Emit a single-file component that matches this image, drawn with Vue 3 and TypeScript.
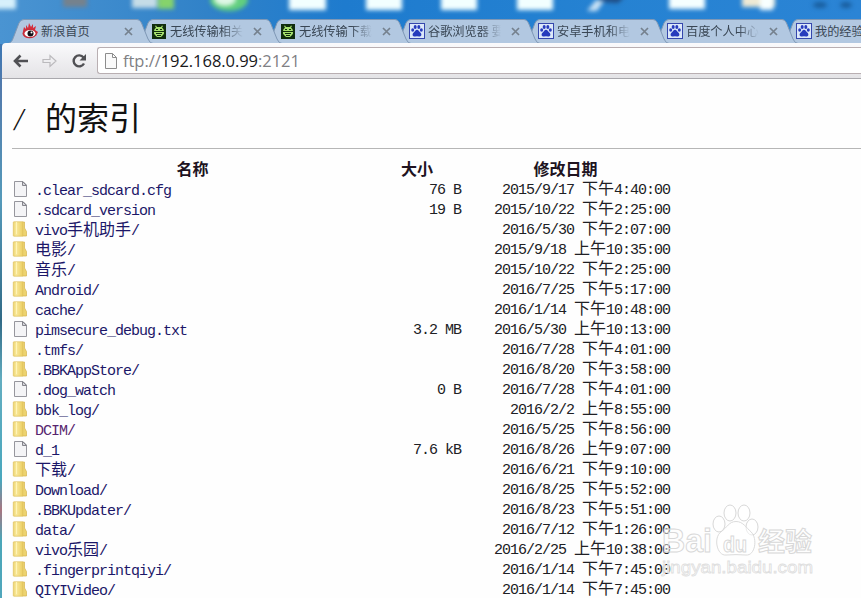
<script setup lang="ts">
interface Tab { title: string; icon: 'sina' | 'android' | 'paw' }
interface Entry { name: string; size: string; date: string; file?: boolean; visited?: boolean }
interface Run { text: string; wide: boolean }

const tabs: Tab[] = [
  { title: '新浪首页', icon: 'sina' },
  { title: '无线传输相关', icon: 'android' },
  { title: '无线传输下载', icon: 'android' },
  { title: '谷歌浏览器 要', icon: 'paw' },
  { title: '安卓手机和电脑', icon: 'paw' },
  { title: '百度个人中心', icon: 'paw' },
  { title: '我的经验', icon: 'paw' },
]

const entries: Entry[] = [
  { name: '.clear_sdcard.cfg', size: '76 B', date: '2015/9/17 下午4:40:00', file: true },
  { name: '.sdcard_version', size: '19 B', date: '2015/10/22 下午2:25:00', file: true },
  { name: 'vivo手机助手/', size: '', date: '2016/5/30 下午2:07:00' },
  { name: '电影/', size: '', date: '2015/9/18 上午10:35:00' },
  { name: '音乐/', size: '', date: '2015/10/22 下午2:25:00' },
  { name: 'Android/', size: '', date: '2016/7/25 下午5:17:00' },
  { name: 'cache/', size: '', date: '2016/1/14 下午10:48:00' },
  { name: 'pimsecure_debug.txt', size: '3.2 MB', date: '2016/5/30 上午10:13:00', file: true },
  { name: '.tmfs/', size: '', date: '2016/7/28 下午4:01:00' },
  { name: '.BBKAppStore/', size: '', date: '2016/8/20 下午3:58:00' },
  { name: '.dog_watch', size: '0 B', date: '2016/7/28 下午4:01:00', file: true },
  { name: 'bbk_log/', size: '', date: '2016/2/2 上午8:55:00' },
  { name: 'DCIM/', size: '', date: '2016/5/25 下午8:56:00', visited: true },
  { name: 'd_1', size: '7.6 kB', date: '2016/8/26 上午9:07:00', file: true },
  { name: '下载/', size: '', date: '2016/6/21 下午9:10:00' },
  { name: 'Download/', size: '', date: '2016/8/25 下午5:52:00' },
  { name: '.BBKUpdater/', size: '', date: '2016/8/23 下午5:51:00' },
  { name: 'data/', size: '', date: '2016/7/12 下午1:26:00' },
  { name: 'vivo乐园/', size: '', date: '2016/2/25 上午10:38:00' },
  { name: '.fingerprintqiyi/', size: '', date: '2016/1/14 下午7:45:00' },
  { name: 'QIYIVideo/', size: '', date: '2016/1/14 下午7:45:00' },
]

// Latin runs are half the width of the CJK ones
function runs(s: string): Run[] {
  return (s.match(/[\u4e00-\u9fff]+|[^\u4e00-\u9fff]+/g) ?? []).map(text => ({
    text,
    wide: /[\u4e00-\u9fff]/.test(text),
  }))
}
</script>

<template>
  <div class="window">
    <svg class="desktop" width="861" height="44" viewBox="0 0 861 44">
      <g class="blurred">
        <rect x="-8" y="-4" width="24" height="13" fill="#d7f0fb" />
        <rect x="63" y="-6" width="24" height="13" fill="#75828d" />
        <rect x="132" y="-6" width="25" height="14" fill="#c5dce7" />
        <rect x="158" y="-6" width="16" height="15" fill="#86d36b" />
        <ellipse cx="229" cy="0" rx="19" ry="11" fill="#62cf7e" />
        <ellipse cx="225" cy="-1" rx="11" ry="7" fill="#dff7e6" />
        <rect x="289" y="-6" width="37" height="16" fill="#f2ffff" />
        <rect x="366" y="-6" width="36" height="16" fill="#f2ffff" />
        <rect x="441" y="-6" width="36" height="16" fill="#f2ffff" />
        <rect x="517" y="-6" width="36" height="16" fill="#f2ffff" />
        <path d="M588 9L603-4H625L618 3L603 2L596 11Z" fill="#204c83" />
        <path d="M587 11L596 0L604 1L597 11Z" fill="#c9e2f5" />
        <rect x="669" y="-6" width="36" height="15" fill="#f5ffff" />
        <rect x="742" y="-6" width="33" height="13" fill="#eee9d4" />
        <rect x="760" y="-6" width="13" height="16" fill="#f8ffff" />
        <ellipse cx="820" cy="5" rx="7" ry="3" fill="#195d9d" />
        <ellipse cx="846" cy="5" rx="6" ry="3" fill="#195d9d" />
      </g>
    </svg>
    <header class="tabs">
      <div v-for="(tab, i) in tabs" :key="i" class="tab" :style="{ zIndex: 10 - i }">
        <svg class="shape" width="146" height="25" viewBox="0 0 146 25">
          <path d="M0 24.5C4 23 4 22 6 17L11 4Q12.500 .5 16 .5H129Q132 .5 133.500 4L140 20Q142 24.500 145 24.500" />
        </svg>
        <svg v-if="tab.icon === 'sina'" class="fav" viewBox="0 0 16 16">
          <path d="M1 8L2 4L4 6L4 2L6 5L7 0L9 4L11 1L11 5L14 3L13 7L16 9L14 13H2Z" fill="#d52f3d" />
          <ellipse cx="7.500" cy="10.500" rx="7" ry="4.800" fill="#c62e3c" />
          <ellipse cx="8" cy="10.500" rx="5.500" ry="3.500" fill="#fff" />
          <circle cx="8.500" cy="10.500" r="3" fill="#151018" />
          <circle cx="9.500" cy="9.500" r="1" fill="#fff" />
        </svg>
        <svg v-else-if="tab.icon === 'android'" class="fav" viewBox="0 0 16 16">
          <rect x="1" y="1" width="14" height="15" fill="#102d0e" />
          <path d="M4 3L5 2.500L6 4H10L11 2.500L12 3L11 4.500Q13 6 13 8H3Q3 6 5 4.500ZM3 9H13V10.500L12 12L10 14H6L4 12L3 10.500Z" fill="#a6e16d" />
          <path d="M5 6H7V7H5ZM9 6H11V7H9ZM5 10H11V11H5ZM6 12H10V13H6Z" fill="#102d0e" />
        </svg>
        <svg v-else class="fav" viewBox="0 0 16 16">
          <rect x=".5" y=".5" width="15" height="15" fill="#dce8fa" stroke="#3547ad" />
          <g fill="#263bbd">
            <ellipse cx="3.700" cy="7" rx="1.500" ry="1.800" />
            <ellipse cx="6.200" cy="4" rx="1.500" ry="1.900" />
            <ellipse cx="9.800" cy="4" rx="1.500" ry="1.900" />
            <ellipse cx="12.300" cy="7" rx="1.500" ry="1.800" />
            <path d="M8 6.700C6.500 6.700 6 8.500 4.500 9.800C2.800 11.300 3.700 14 6 13.500Q8 13 10 13.500C12.300 14 13.200 11.300 11.500 9.800C10 8.500 9.500 6.700 8 6.700Z" />
          </g>
        </svg>
        <span class="tab-title" :class="{ faded: tab.title.length > 4 }">{{ tab.title }}</span>
        <svg class="close" viewBox="0 0 9 9"><path d="M1 1L8 8M8 1L1 8" /></svg>
      </div>
    </header>

    <nav class="toolbar">
      <svg class="nav back" viewBox="0 0 16 14"><path d="M15 7H2M7.500 1.500L2 7L7.500 12.500" /></svg>
      <svg class="nav forward" viewBox="0 0 16 14"><path d="M1 5.500H8V1.500L14 7L8 12.500V8.500H1Z" /></svg>
      <svg class="nav reload" viewBox="0 0 16 16"><path d="M12.500 4.500A5.500 5.500 0 1 0 13 10.500" /><path class="tip" d="M15 1V7.500H8.500Z" /></svg>
      <div class="address">
        <svg class="page" viewBox="0 0 12 16"><path d="M.5 .5H7.500L11.500 4.500V15.500H.5ZM7.500 .5V4.500H11.500" /></svg>
        <span class="url">ftp://<b>192.168.0.99</b>:2121</span>
      </div>
    </nav>

    <main class="content">
      <h1><span class="slash">/</span>的索引</h1>
      <div class="row head"><span>名称</span><span>大小</span><span>修改日期</span></div>
      <div v-for="entry in entries" :key="entry.name" class="row">
        <a class="name" :class="{ visited: entry.visited }">
          <svg v-if="entry.file" class="icon" viewBox="0 0 16 16">
            <path d="M2.500 .5H11L14.500 4V15.500H2.500Z" fill="#f4f4f6" stroke="#96969d" />
            <path d="M10.500 .5V4.500H14.500Z" fill="#d5d5da" stroke="#85858c" />
          </svg>
          <svg v-else class="icon" viewBox="0 0 16 16">
            <path d="M10 1H12.500V7L14.500 10.500V15H10Z" fill="#edd36f" stroke="#d6b44f" stroke-width=".7" />
            <rect x="1.300" y=".8" width="9.500" height="14.400" rx=".6" fill="url(#folderFill)" stroke="#dfc25e" stroke-width=".7" />
            <path d="M4.500 1V13" stroke="#fff4b8" />
          </svg>
          <span class="label"><span v-for="(r, k) in runs(entry.name)" :key="k" :class="r.wide ? 'wide' : 'narrow'">{{ r.text }}</span></span>
        </a>
        <span class="value"><span class="narrow">{{ entry.size }}</span></span>
        <span class="value"><span v-for="(r, k) in runs(entry.date)" :key="k" :class="r.wide ? 'wide' : 'narrow'">{{ r.text }}</span></span>
      </div>
    </main>

    <svg class="watermark" width="172" height="80" viewBox="0 0 172 80">
      <defs>
        <linearGradient id="folderFill"><stop offset="0" stop-color="#edd46f" /><stop offset=".3" stop-color="#f9e99d" /><stop offset="1" stop-color="#ebce61" /></linearGradient>
      </defs>
      <g class="outline">
        <text x="2" y="52" font-size="34" textLength="50" lengthAdjust="spacingAndGlyphs">Bai</text>
        <ellipse cx="59" cy="24" rx="6" ry="8" />
        <ellipse cx="70" cy="13" rx="6" ry="8" />
        <ellipse cx="84" cy="13" rx="6" ry="8" />
        <ellipse cx="92" cy="27" rx="6" ry="8" />
        <path d="M76 25C69 25 67 32 61 37C53 44 57 65 66 64Q76 63 86 64C95 65 98 45 91 37C86 32 83 25 76 25Z" />
        <text x="63" y="58" font-size="22" textLength="24" lengthAdjust="spacingAndGlyphs">du</text>
        <text x="98" y="51" font-size="26" textLength="54" lengthAdjust="spacingAndGlyphs">经验</text>
      </g>
      <text class="domain" x="2" y="73" font-size="17" textLength="151" lengthAdjust="spacingAndGlyphs">jingyan.baidu.com</text>
    </svg>
  </div>
</template>

<style>
body { margin: 0; overflow: hidden; }
</style>

<style scoped>
.window { position: relative; width: 861px; height: 598px; overflow: hidden; box-sizing: border-box; padding-left: 2px; background: linear-gradient(#2672b9 0, #537bac 90px, #559aba 200px, #316a86 320px, #63adc0 380px, #49a7bd 480px, #a87580 510px, #4aa6b8 540px, #50a6bb); font-family: "Noto Sans CJK SC", sans-serif; }
.desktop { position: absolute; left: 0; top: 0; background: linear-gradient(90deg, #4a94d2 0, #3182c8 24%, #1e7bce 40%, #2582d2 70%, #2b84d5); }
.blurred { filter: blur(2px); }
.tabs { position: relative; display: flex; height: 43px; box-sizing: border-box; padding: 19px 0 0 6px; }
.tab { position: relative; flex: 0 0 129px; display: flex; align-items: center; height: 24px; box-sizing: border-box; padding-left: 14px; }
.shape { position: absolute; left: 0; top: 0; fill: #b2c8e1; stroke: #7f98b6; stroke-width: 1; }
.fav { position: relative; width: 16px; height: 16px; flex: none; }
.tab-title { position: relative; width: 73px; margin-left: 3px; overflow: hidden; white-space: nowrap; font-size: 12.2px; line-height: 22px; color: #394654; }
.faded { -webkit-mask-image: linear-gradient(90deg, #000 72%, transparent 100%); mask-image: linear-gradient(90deg, #000 72%, transparent 100%); }
.close { position: relative; width: 9px; height: 9px; margin-left: 10px; flex: none; fill: none; stroke: #75818e; stroke-width: 1.7; }
.toolbar { position: relative; z-index: 20; display: flex; align-items: center; height: 36px; box-sizing: border-box; padding-left: 11px; border-bottom: 1px solid #a9a8ad; border-radius: 4px 0 0 0; background: linear-gradient(#fafafc, #e4e3e6); }
.nav { flex: none; width: 16px; height: 14px; fill: none; stroke: #505054; stroke-width: 2.6; }
.forward { margin-left: 13px; stroke: #bbbabd; stroke-width: 1.2; }
.reload { width: 16px; height: 16px; margin-left: 13px; stroke-width: 2.4; }
.tip { fill: #505054; stroke: none; }
.address { display: flex; align-items: center; flex: 1; height: 27px; box-sizing: border-box; margin-left: 10px; padding-left: 7px; border: 1px solid #b9afb2; border-right: 0; border-radius: 3px 0 0 3px; background: #fff; }
.page { width: 12px; height: 16px; fill: #fafafa; stroke: #8d8d8d; }
.url { margin-left: 6px; font: 16.5px/24px "Open Sans", sans-serif; letter-spacing: -.05px; color: #808084; }
.url b { font-weight: 400; color: #19191b; }
.content { height: 519px; box-sizing: border-box; padding-left: 10px; background: #fefefe; overflow: hidden; }
h1 { height: 70px; margin: 0 0 9px; box-sizing: border-box; padding-top: 16px; border-bottom: 1px solid #b6b6b6; font-size: 32px; line-height: 42px; font-weight: 400; color: #111; }
.slash { display: inline-block; width: 33px; text-indent: 3px; font-family: "Liberation Serif", serif; transform: skewX(-10deg); }
.row { display: grid; grid-template-columns: 361px 88px 209px; height: 20px; line-height: 18px; font-size: 16px; color: #202024; white-space: nowrap; }
.head { text-align: center; font-weight: 700; line-height: 20px; height: 20px; color: #20131f; }
.name { display: flex; align-items: center; color: #1c1768; }
.visited { color: #57256e; }
.icon { width: 16px; height: 16px; margin-right: 7px; flex: none; }
.label { height: 20px; }
.value { text-align: right; }
.narrow { font-family: "Liberation Mono", monospace; font-size: 15px; letter-spacing: -1.002px; white-space: pre; }
.wide { font-size: 16px; font-weight: 400; }
.watermark { position: absolute; left: 660px; top: 500px; }
.outline { fill: #fff; fill-opacity: .5; stroke: #d8d8d8; stroke-width: 1; font-family: "Liberation Sans", "Noto Sans CJK SC", sans-serif; font-weight: 700; }
.outline path { transform: translateY(0) scaleY(.86); }
.outline text { transform: none; }
.outline text:nth-of-type(2) { transform: translateY(-6px); }
.domain { fill: #fff; fill-opacity: .8; stroke: #dfdfdf; stroke-width: .8; font-family: "Liberation Sans", sans-serif; }
</style>
